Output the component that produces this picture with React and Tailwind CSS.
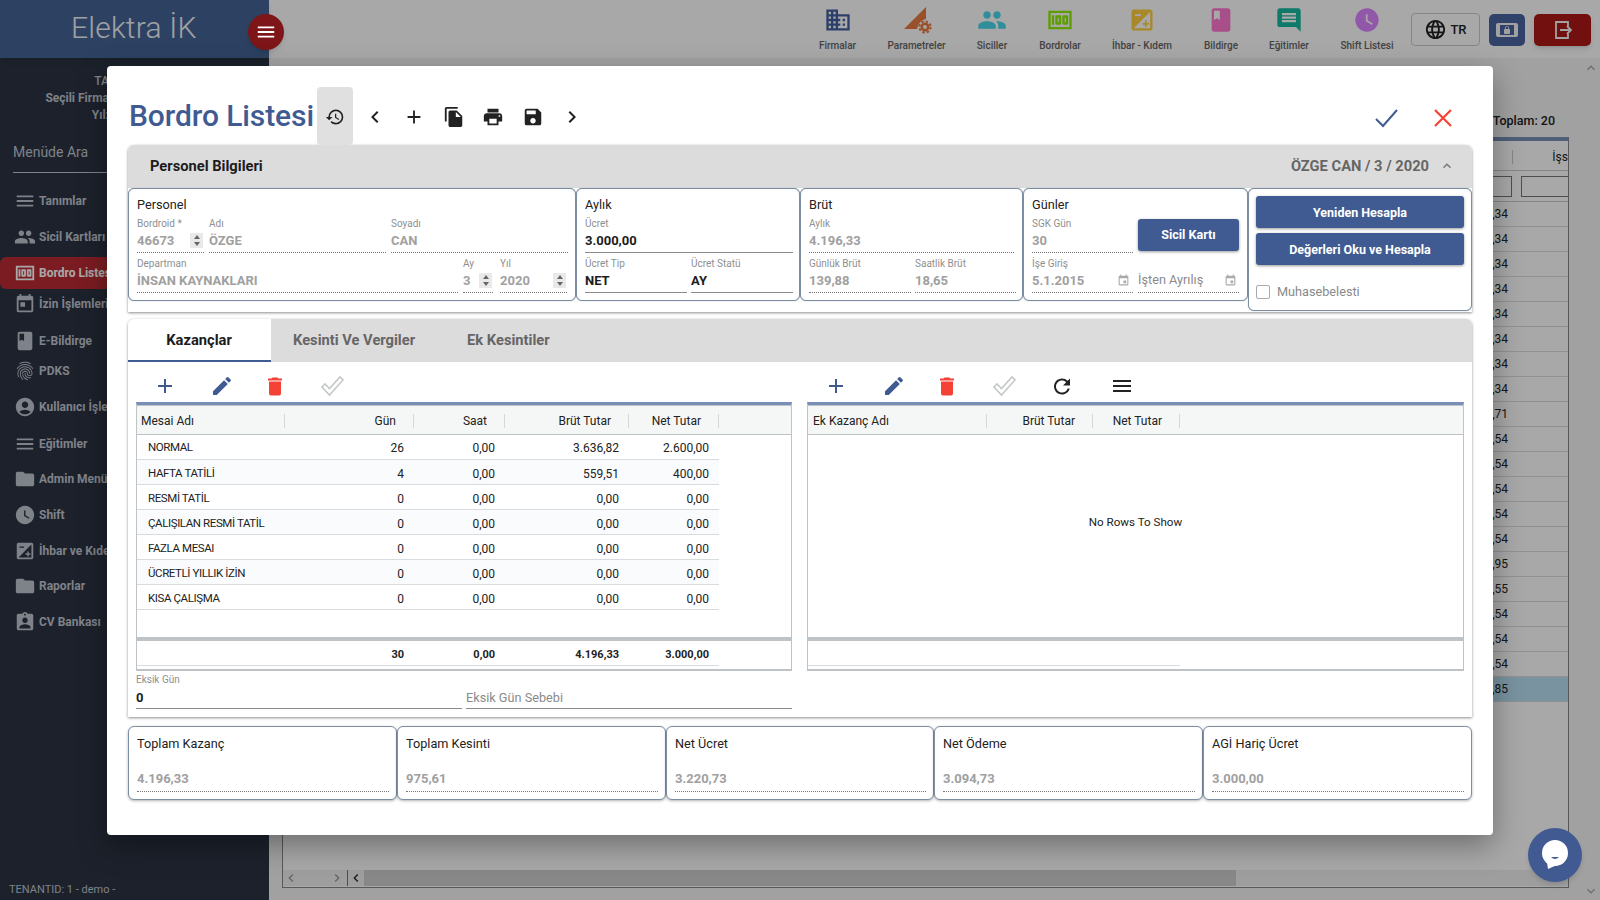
import {
  MdDomain, MdPeople, MdMoney, MdExposure, MdBook, MdInsertComment, MdWatchLater, MdLanguage,
  MdScreenLockLandscape, MdHistory, MdChevronLeft, MdChevronRight, MdAdd, MdFileCopy, MdPrint, MdSave,
  MdEdit, MdDelete, MdRefresh, MdMenu, MdToday, MdFingerprint, MdAccountCircle, MdFolder,
  MdAssignmentInd, MdEvent, MdKeyboardArrowUp, MdKeyboardArrowDown,
} from 'react-icons/md';

const topItems = [
  { label: 'Firmalar', icon: <MdDomain size={28} className="text-[#4460a1]" />, w: 'w-[79px]' },
  { label: 'Parametreler', icon: <ParamIcon />, w: 'w-[79px]' },
  { label: 'Siciller', icon: <MdPeople size={30} className="text-[#46d8ea]" />, w: 'w-[72px]' },
  { label: 'Bordrolar', icon: <MdMoney size={28} className="text-[#8fee00]" />, w: 'w-[64px]' },
  { label: 'İhbar - Kıdem', icon: <MdExposure size={28} className="text-[#ffd040]" />, w: 'w-[100px]' },
  { label: 'Bildirge', icon: <MdBook size={28} className="text-[#ff79d1]" />, w: 'w-[58px]' },
  { label: 'Eğitimler', icon: <MdInsertComment size={28} className="text-[#14b9a2]" />, w: 'w-[78px]' },
  { label: 'Shift Listesi', icon: <MdWatchLater size={28} className="text-[#dc84ff]" />, w: 'w-[78px]' },
];

const sideItems = [
  { label: 'Tanımlar', icon: MdMenu, h: 'h-[36px]' },
  { label: 'Sicil Kartları', icon: MdPeople, h: 'h-[38px] pb-[2px]' },
  { label: 'Bordro Listesi', icon: MdMoney, h: 'h-[32px]', active: true },
  { label: 'İzin İşlemleri', icon: MdToday, h: 'h-[30px]' },
  { label: 'E-Bildirge', icon: MdBook, h: 'h-[44px]' },
  { label: 'PDKS', icon: MdFingerprint, h: 'h-[16px]' },
  { label: 'Kullanıcı İşlemleri', icon: MdAccountCircle, h: 'h-[36px] mt-[10px]' },
  { label: 'Eğitimler', icon: MdMenu, h: 'h-[38px]' },
  { label: 'Admin Menü', icon: MdFolder, h: 'h-[32px]' },
  { label: 'Shift', icon: MdWatchLater, h: 'h-[40px]' },
  { label: 'İhbar ve Kıdem', icon: MdExposure, h: 'h-[32px]' },
  { label: 'Raporlar', icon: MdFolder, h: 'h-[38px]' },
  { label: 'CV Bankası', icon: MdAssignmentInd, h: 'h-[34px]' },
];

const backRows = ['34', '34', '34', '34', '34', '34', '34', '34', '71', '54', '54', '54', '54', '54', '95', '55', '54', '54', '54', '85'];

const mesaiRows = [
  ['NORMAL', '26', '0,00', '3.636,82', '2.600,00'],
  ['HAFTA TATİLİ', '4', '0,00', '559,51', '400,00'],
  ['RESMİ TATİL', '0', '0,00', '0,00', '0,00'],
  ['ÇALIŞILAN RESMİ TATİL', '0', '0,00', '0,00', '0,00'],
  ['FAZLA MESAI', '0', '0,00', '0,00', '0,00'],
  ['ÜCRETLİ YILLIK İZİN', '0', '0,00', '0,00', '0,00'],
  ['KISA ÇALIŞMA', '0', '0,00', '0,00', '0,00'],
];

const mesaiCols = ['w-[148px]', 'w-[129px]', 'w-[91px]', 'w-[124px]', 'w-[90px]'];

const totals = [
  { title: 'Toplam Kazanç', value: '4.196,33', w: 'w-[269px]' },
  { title: 'Toplam Kesinti', value: '975,61', w: 'w-[269px]' },
  { title: 'Net Ücret', value: '3.220,73', w: 'w-[268px]' },
  { title: 'Net Ödeme', value: '3.094,73', w: 'w-[269px]' },
  { title: 'AGİ Hariç Ücret', value: '3.000,00', w: 'w-[269px]' },
];

function ParamIcon() {
  return (
    <svg width="30" height="28" viewBox="0 0 30 28">
      <path d="M2 23 L24 1 V13 Q17 14 15 23 Z" fill="#ea7a40" />
      <circle cx="23" cy="21" r="3.2" fill="none" stroke="#ea7a40" strokeWidth="2.6" />
      <circle cx="23" cy="21" r="5.6" fill="none" stroke="#ea7a40" strokeWidth="2" strokeDasharray="2.4 2" />
    </svg>
  );
}

function OutlineCheck() {
  return (
    <svg width="24" height="24" viewBox="0 0 24 24">
      <path d="M2 13 L5 10 L9.5 14.5 L20 3 L23 6 L9.5 21 Z" fill="none" stroke="#c4c8c8" strokeWidth="1.6" />
    </svg>
  );
}

function Spinner() {
  return (
    <span className="flex flex-col w-[13px] h-[15px] bg-[#e9e9e9] items-center justify-around shrink-0">
      <svg width="6" height="4" viewBox="0 0 6 4"><path d="M3 0 L6 4 H0 Z" fill="#666" /></svg>
      <svg width="6" height="4" viewBox="0 0 6 4"><path d="M3 4 L6 0 H0 Z" fill="#666" /></svg>
    </span>
  );
}

function Field({ label, value, w, solid, dark, suffix }) {
  return (
    <div className={`${w} h-[36px] shrink-0 flex flex-col border-b ${solid ? 'border-solid border-[#8a8a8a]' : 'border-dotted border-[#777]'}`}>
      <div className="h-[14px] leading-[14px] text-[10px] text-[#8f8f8f] whitespace-nowrap">{label}</div>
      <div className={`h-[21px] pb-[2px] flex items-center justify-between pr-[1px] text-[13px] font-bold ${dark ? 'text-[#1c1c1c]' : 'text-[#a0a0a0]'}`}>
        <span>{value}</span>
        {suffix}
      </div>
    </div>
  );
}

function Box({ title, w, children, tall }) {
  return (
    <div className={`${w} ${tall ? 'h-[123px]' : 'h-[113px]'} shrink-0 bg-white border border-[#7d8ea3] shadow-[0_0_1px_rgba(120,140,165,0.9)] rounded-[6px] px-[8px] pt-[8px]`}>
      {title && <div className="h-[16px] leading-[16px] text-[12.7px] text-[#222] mb-[4px]">{title}</div>}
      {children}
    </div>
  );
}

function GridFrame({ header, children, footer }) {
  return (
    <div className="flex flex-col h-[269px] border-t-[3px] border-t-[#7a8fb8] border-x border-x-[#bdc3c7] border-b-2 border-b-[#bdc3c7]">
      <div className="h-[30px] pt-[1px] shrink-0 flex bg-[#f5f7f7] border-y border-[#bdc3c7] text-[12px] text-[#222]">{header}</div>
      <div className="flex-1 min-h-0">{children}</div>
      <div className="shrink-0 border-t-4 border-t-[#bdc3c7] h-[32px]">{footer}</div>
    </div>
  );
}

function HeadCell({ w, children, left }) {
  return (
    <div className={`${w} h-full flex items-center shrink-0`}>
      <span className={`flex-1 whitespace-nowrap ${left ? 'pl-[4px]' : 'text-right pr-[17px]'}`}>{children}</span>
      <span className="w-px h-[14px] bg-[#d5d8da]" />
    </div>
  );
}

function App() {
  return (
    <div className="relative w-[1600px] h-[900px] overflow-hidden flex bg-white font-[Roboto,sans-serif]">
      {/* sidebar */}
      <aside className="w-[269px] shrink-0 bg-[#2b3342] flex flex-col relative">
        <div className="h-[58px] shrink-0 bg-[#456497] shadow-md flex items-center pl-[71px]">
          <span className="text-[30px] font-light text-[#f2f4f8] leading-none tracking-[0.2px] pb-[2px]">Elektra İK</span>
        </div>
        <div className="pt-[15px] text-right pr-[160px] text-[12px] font-medium text-[#c0c5d0] leading-[17px] whitespace-nowrap">
          <div>TA</div>
          <div className="font-bold">Seçili Firma</div>
          <div className="font-bold">Yıl:</div>
        </div>
        <div className="mx-[13px] mt-[18px] h-[31px] border-b border-[#c0c5d0] text-[14px] text-[#c0c5d0]">Menüde Ara</div>
        <nav className="mt-[10px] flex flex-col">
          {sideItems.map((it) => (
            <div key={it.label} className={`${it.h} flex items-center pl-[14px] gap-[3px] text-[12px] font-bold whitespace-nowrap ${it.active ? 'bg-[#bb2b34] rounded-[6px] text-white' : 'text-[#c0c5d0]'}`}>
              <it.icon size={22} className="shrink-0" />
              <span>{it.label}</span>
            </div>
          ))}
        </nav>
        <div className="mt-auto pl-[9px] pb-[2px] text-[11px] text-[#c0c5d0]">TENANTID: 1 - demo -</div>
      </aside>

      {/* main */}
      <div className="flex-1 min-w-0 flex flex-col">
        <header className="h-[58px] shrink-0 bg-white shadow-md flex items-start justify-end pr-[9px]">
          <div className="flex mr-[4px]">
            {topItems.map((it) => (
              <div key={it.label} className={`${it.w} h-[58px] flex flex-col items-center`}>
                <div className="h-[39px] flex items-center justify-center">{it.icon}</div>
                <div className="text-[10px] font-medium text-[#666] whitespace-nowrap leading-[14px]">{it.label}</div>
              </div>
            ))}
          </div>
          <div className="ml-[1px] mt-[13px] w-[69px] h-[33px] border border-[#ccc] rounded-[4px] flex items-center justify-center gap-[3px] text-[13px] font-medium text-[#222]">
            <MdLanguage size={23} />
            <span>TR</span>
          </div>
          <div className="ml-[9px] mt-[14px] w-[36px] h-[32px] rounded-[5px] bg-[#4a64a2] flex items-center justify-center text-[#f5f5f5]">
            <MdScreenLockLandscape size={24} />
          </div>
          <div className="ml-[9px] mt-[14px] w-[57px] h-[32px] rounded-[5px] bg-[#ad1818] shadow-md flex items-center justify-center">
            <svg width="20" height="20" viewBox="0 0 20 20" fill="none" stroke="#f5f5f5" strokeWidth="1.8">
              <path d="M15 6 V2 H3 V18 H15 V14" />
              <path d="M7 10 H18 M14 6 L18 10 L14 14" />
            </svg>
          </div>
        </header>

        <div className="flex-1 min-h-0 flex bg-[#f4f4f4]">
          <div className="flex-1 min-w-0 flex flex-col pl-[13px]">
            <div className="h-[79px] shrink-0 flex items-end justify-end pr-[14px] pb-[6px] text-[12.5px] font-medium text-[#222]">Toplam: 20</div>
            <div className="h-[751px] bg-white border border-[#888] border-t-4 border-t-[#7a8fb8] flex flex-col text-[12px] text-[#222]">
              <div className="h-[30px] pt-[2px] shrink-0 flex items-center justify-end border-b border-[#ccc] relative">
                <span className="mr-[62px]">n</span>
                <span className="w-px h-[14px] bg-[#ccc] mr-[39px]" />
                <span>İşs</span>
              </div>
              <div className="h-[31px] shrink-0 flex items-center justify-end gap-[9px] border-b border-[#ccc]">
                <span className="w-[30px] h-[21px] border border-[#777]" />
                <span className="w-[47px] h-[21px] border border-[#777] border-r-0" />
              </div>
              <div className="flex-1 min-h-0">
                {backRows.map((v, i) => (
                  <div key={i} className={`h-[25px] flex items-center justify-end pr-[60px] border-b border-[#ddd] ${i === 19 ? 'bg-[#b8e0f5]' : ''}`}>,{v}</div>
                ))}
              </div>
              <div className="h-[16px] mb-[1px] shrink-0 flex items-center bg-[#f0f0f0] text-[#999]">
                <MdChevronLeft size={16} />
                <MdChevronRight size={16} className="ml-[30px]" />
                <span className="w-px h-full bg-[#777] ml-[2px]" />
                <MdChevronLeft size={16} className="text-[#222]" />
                <span className="w-[872px] h-full bg-[#cfcfcf]" />
              </div>
            </div>
          </div>
          <div className="w-[31px] shrink-0 flex flex-col justify-between items-end text-[#aaa] pb-[1px] pr-[1px]">
            <MdKeyboardArrowUp size={16} className="mt-[2px]" />
            <MdKeyboardArrowDown size={16} />
          </div>
        </div>
      </div>

      {/* backdrop */}
      <div className="absolute inset-0 bg-black/[0.34] z-10" />

      {/* hamburger over the sidebar edge */}
      <div className="absolute left-[248px] top-[14px] w-[36px] h-[36px] rounded-full bg-[#7e1518] shadow-md z-20 flex items-center justify-center text-white">
        <MdMenu size={22} />
      </div>

      {/* modal */}
      <div className="absolute left-[107px] top-[66px] w-[1386px] h-[769px] z-20 bg-white rounded-[4px] shadow-[0_10px_30px_rgba(0,0,0,0.35)] pt-[21px] px-[21px] text-[#222]">
        <div className="h-[58px] flex items-center">
          <h1 className="ml-[1px] w-[188px] text-[30px] font-medium tracking-[-0.1px] text-[#3f5b92] whitespace-nowrap pb-[1px]">Bordro Listesi</h1>
          <button className="w-[36px] h-[58px] pt-[2px] bg-[#e0e0e0] rounded-[4px] flex items-center justify-center"><MdHistory size={20} /></button>
          <div className="flex ml-[2px]">
            {[MdChevronLeft, MdAdd, MdFileCopy, MdPrint, MdSave, MdChevronRight].map((Icon, i) => (
              <span key={i} className="w-[39.5px] h-[58px] pt-[2px] flex items-center justify-center"><Icon size={i === 0 || i === 5 ? 24 : 22} /></span>
            ))}
          </div>
          <div className="ml-auto flex items-center gap-[33px] pr-[17px] pt-[4px]">
            <svg width="24" height="24" viewBox="0 0 24 24" fill="none" stroke="#3f5b92" strokeWidth="2"><path d="M2 13 L9 20 L23 4" /></svg>
            <svg width="24" height="24" viewBox="0 0 24 24" fill="none" stroke="#f44336" strokeWidth="2.2"><path d="M4 4 L20 20 M20 4 L4 20" /></svg>
          </div>
        </div>

        {/* personel panel */}
        <section className="rounded-t-[6px] shadow-[0_1px_3px_rgba(0,0,0,0.45)] h-[167px]">
          <div className="h-[43px] bg-[#dcdcdc] rounded-t-[6px] flex items-center justify-between pl-[22px] pr-[17px]">
            <span className="text-[14.7px] font-bold text-[#1c1c1c]">Personel Bilgileri</span>
            <span className="flex items-center gap-[10px] text-[14.7px] font-bold text-[#666]">
              ÖZGE CAN / 3 / 2020
              <MdKeyboardArrowUp size={16} className="text-[#777]" />
            </span>
          </div>
          <div className="flex items-start">
            <Box title="Personel" w="w-[448px]">
              <div className="flex gap-[5px]">
                <Field label="Bordroid *" value="46673" w="w-[67px]" suffix={<Spinner />} />
                <Field label="Adı" value="ÖZGE" w="w-[177px]" />
                <Field label="Soyadı" value="CAN" w="w-[177px]" />
              </div>
              <div className="flex gap-[5px] mt-[4px]">
                <Field label="Departman" value="İNSAN KAYNAKLARI" w="w-[321px]" />
                <Field label="Ay" value="3" w="w-[30px]" suffix={<Spinner />} />
                <Field label="Yıl" value="2020" w="w-[67px] ml-[2px]" suffix={<Spinner />} />
              </div>
            </Box>
            <Box title="Aylık" w="w-[224px]">
              <Field label="Ücret" value="3.000,00" w="w-[208px]" solid dark />
              <div className="flex gap-[4px] mt-[4px]">
                <Field label="Ücret Tip" value="NET" w="w-[102px]" solid dark />
                <Field label="Ücret Statü" value="AY" w="w-[102px]" solid dark />
              </div>
            </Box>
            <Box title="Brüt" w="w-[223px]">
              <Field label="Aylık" value="4.196,33" w="w-[205px]" />
              <div className="flex gap-[4px] mt-[4px]">
                <Field label="Günlük Brüt" value="139,88" w="w-[102px]" />
                <Field label="Saatlik Brüt" value="18,65" w="w-[101px]" />
              </div>
            </Box>
            <Box title="Günler" w="w-[225px]">
              <div className="flex gap-[5px]">
                <Field label="SGK Gün" value="30" w="w-[101px]" />
                <button className="w-[102px] h-[32px] mt-[2px] bg-[#3f5b92] rounded-[3px] shadow-[0_1px_3px_rgba(0,0,0,0.4)] text-[12.5px] font-bold text-white">Sicil Kartı</button>
              </div>
              <div className="flex gap-[5px] mt-[4px]">
                <Field label="İşe Giriş" value="5.1.2015" w="w-[101px]" suffix={<MdEvent size={13} className="text-[#aaa] mr-[2px]" />} />
                <div className="w-[101px] h-[36px] border-b border-dotted border-[#777] flex items-end justify-between pb-[3px] text-[12.7px] text-[#8a8a8a]">
                  <span className="leading-[18px]">İşten Ayrılış</span>
                  <MdEvent size={13} className="text-[#aaa] mr-[2px] mb-[2px]" />
                </div>
              </div>
            </Box>
            <Box w="w-[224px]" tall>
              <div className="flex flex-col gap-[5px] -mt-[1px] -mx-[1px]">
                <button className="h-[32px] pt-[2px] bg-[#3f5b92] rounded-[3px] shadow-[0_1px_3px_rgba(0,0,0,0.4)] text-[12.5px] font-bold text-white">Yeniden Hesapla</button>
                <button className="h-[32px] pt-[2px] bg-[#3f5b92] rounded-[3px] shadow-[0_1px_3px_rgba(0,0,0,0.4)] text-[12.5px] font-bold text-white">Değerleri Oku ve Hesapla</button>
              </div>
              <div className="flex items-center gap-[7px] mt-[17px] -ml-[1px] text-[12.7px] text-[#8a8a8a]">
                <span className="w-[14px] h-[14px] border border-[#aaa] rounded-[2px]" />
                <span>Muhasebelesti</span>
              </div>
            </Box>
          </div>
        </section>

        {/* tabs */}
        <section className="mt-[7px] h-[398px] rounded-t-[6px] shadow-[0_1px_3px_rgba(0,0,0,0.45)]">
          <div className="h-[43px] bg-[#dcdcdc] rounded-t-[6px] flex text-[14.7px] font-bold text-[#666]">
            <div className="w-[143px] pt-[2px] bg-white rounded-tl-[6px] border-b-2 border-[#3f5b92] flex items-center justify-center text-[#1c1c1c] pr-[1px]">Kazançlar</div>
            <div className="pl-[22px] flex items-center">Kesinti Ve Vergiler</div>
            <div className="pl-[52px] flex items-center">Ek Kesintiler</div>
          </div>
          <div className="px-[8px] grid grid-cols-[656px_657px] gap-x-[15px]">
            {/* left */}
            <div>
              <div className="h-[40px] pt-[8px] flex items-center">
                <span className="ml-[17px] w-[24px] flex justify-center text-[#3f5b92]"><MdAdd size={24} /></span>
                <span className="ml-[33px] w-[24px] flex justify-center text-[#3f5b92]"><MdEdit size={24} /></span>
                <span className="ml-[29px] w-[24px] flex justify-center text-[#f44336]"><MdDelete size={25} /></span>
                <span className="ml-[33px] w-[24px] flex justify-center"><OutlineCheck /></span>
              </div>
              <GridFrame
                header={
                  <>
                    <HeadCell w={mesaiCols[0]} left>Mesai Adı</HeadCell>
                    <HeadCell w={mesaiCols[1]}>Gün</HeadCell>
                    <HeadCell w={mesaiCols[2]}>Saat</HeadCell>
                    <HeadCell w={mesaiCols[3]}>Brüt Tutar</HeadCell>
                    <HeadCell w={mesaiCols[4]}>Net Tutar</HeadCell>
                  </>
                }
                footer={
                  <div className="w-[582px] h-[25px] pt-[4px] flex items-center border-b border-[#d9dcde] text-[11px] font-bold text-[#222]">
                    {mesaiCols.map((w, i) => (
                      <div key={w} className={`${w} text-right pr-[10px]`}>{['', '30', '0,00', '4.196,33', '3.000,00'][i]}</div>
                    ))}
                  </div>
                }
              >
                {mesaiRows.map((row, r) => (
                  <div key={row[0]} className={`w-[582px] h-[25px] flex items-center border-b border-[#d9dcde] text-[12px] text-[#222] ${r === 0 ? 'pt-[1px]' : 'pt-[3px]'} ${r % 2 ? 'bg-[#fafbfc]' : ''}`}>
                    {row.map((v, i) => (
                      <div key={i} className={`${mesaiCols[i]} whitespace-nowrap ${i === 0 ? 'pl-[11px] pt-[1px] text-[11.5px] tracking-[-0.4px]' : 'text-right pr-[10px]'}`}>{v}</div>
                    ))}
                  </div>
                ))}
              </GridFrame>
              <div className="flex gap-[4px]">
                <div className="w-[326px] h-[38px] border-b border-[#8a8a8a] pt-[2px]">
                  <div className="h-[14px] leading-[14px] text-[10px] text-[#8f8f8f]">Eksik Gün</div>
                  <div className="h-[21px] flex items-center text-[13px] font-bold text-[#1c1c1c]">0</div>
                </div>
                <div className="w-[326px] h-[38px] border-b border-[#8a8a8a] flex items-end pb-[1px] text-[12.7px] text-[#8a8a8a]">
                  <span className="leading-[19px]">Eksik Gün Sebebi</span>
                </div>
              </div>
            </div>
            {/* right */}
            <div>
              <div className="h-[40px] pt-[8px] flex items-center">
                <span className="ml-[17px] w-[24px] flex justify-center text-[#3f5b92]"><MdAdd size={24} /></span>
                <span className="ml-[34px] w-[24px] flex justify-center text-[#3f5b92]"><MdEdit size={24} /></span>
                <span className="ml-[29px] w-[24px] flex justify-center text-[#f44336]"><MdDelete size={25} /></span>
                <span className="ml-[33px] w-[24px] flex justify-center"><OutlineCheck /></span>
                <span className="ml-[34px] w-[24px] flex justify-center"><MdRefresh size={25} /></span>
                <span className="ml-[36px] w-[24px] flex justify-center"><MdMenu size={26} /></span>
              </div>
              <GridFrame
                header={
                  <>
                    <HeadCell w="w-[179px]" left><span className="pl-[1px]">Ek Kazanç Adı</span></HeadCell>
                    <HeadCell w="w-[106px]">Brüt Tutar</HeadCell>
                    <HeadCell w="w-[87px]">Net Tutar</HeadCell>
                  </>
                }
                footer={<div className="w-[372px] h-[25px] border-b border-[#d9dcde]" />}
              >
                <div className="h-full flex items-center justify-center text-[11.6px] text-[#222] pb-[27px]">No Rows To Show</div>
              </GridFrame>
            </div>
          </div>
        </section>

        {/* totals */}
        <section className="mt-[9px] flex">
          {totals.map((t) => (
            <div key={t.title} className={`${t.w} h-[74px] bg-white border border-[#7d8ea3] rounded-[6px] shadow-[0_1px_3px_rgba(0,0,0,0.3)] pl-[8px] pr-[7px] pt-[9px]`}>
              <div className="h-[16px] leading-[16px] text-[12.7px] text-[#222]">{t.title}</div>
              <div className="mt-[16px] h-[24px] pb-[2px] flex items-center text-[13px] font-bold text-[#a0a0a0] border-b border-dotted border-[#777]">{t.value}</div>
            </div>
          ))}
        </section>
      </div>

      {/* chat */}
      <div className="absolute left-[1528px] top-[828px] w-[54px] h-[54px] rounded-full bg-[#415b92] z-30 shadow-md flex items-center justify-center">
        <svg width="30" height="30" viewBox="0 0 30 30">
          <circle cx="15" cy="13" r="13" fill="#fff" />
          <path d="M7 22 L8 29 L17 25 Z" fill="#fff" />
          <path d="M11 17 H19 Q15 21 11 17 Z" fill="#415b92" />
        </svg>
      </div>
    </div>
  );
}

export default App;
